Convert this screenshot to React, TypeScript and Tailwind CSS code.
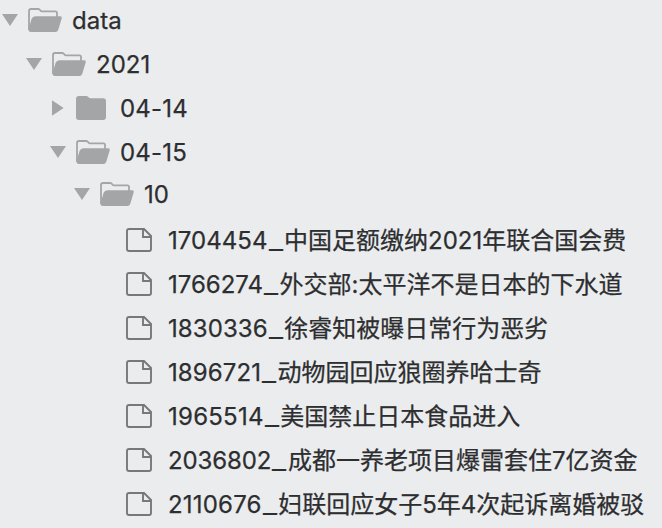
import clsx from "clsx";

type Entry = {
  name: string;
  title?: string;
  kind: "open" | "closed" | "file";
  indent: string;
  row?: string;
  tracking?: string;
};

const entries: Entry[] = [
  { name: "data", kind: "open", indent: "pl-[2px]" },
  { name: "2021", kind: "open", indent: "pl-[26px]" },
  { name: "04-14", kind: "closed", indent: "pl-[50px]", tracking: "tracking-[0.2px]" },
  { name: "04-15", kind: "open", indent: "pl-[50px]", tracking: "tracking-[0.2px]" },
  { name: "10", kind: "open", indent: "pl-[74px]", row: "h-10 mb-1" },
  { name: "1704454", title: "中国足额缴纳2021年联合国会费", kind: "file", indent: "pl-[126px]", tracking: "tracking-[0.05px]" },
  { name: "1766274", title: "外交部:太平洋不是日本的下水道", kind: "file", indent: "pl-[126px]" },
  { name: "1830336", title: "徐睿知被曝日常行为恶劣", kind: "file", indent: "pl-[126px]", tracking: "tracking-[0.08px]" },
  { name: "1896721", title: "动物园回应狼圈养哈士奇", kind: "file", indent: "pl-[126px]", tracking: "tracking-[0.1px]" },
  { name: "1965514", title: "美国禁止日本食品进入", kind: "file", indent: "pl-[126px]", tracking: "tracking-[0.25px]" },
  { name: "2036802", title: "成都一养老项目爆雷套住7亿资金", kind: "file", indent: "pl-[126px]", tracking: "tracking-[-0.1px]" },
  { name: "2110676", title: "妇联回应女子5年4次起诉离婚被驳", kind: "file", indent: "pl-[126px]", tracking: "tracking-[0.2px]" },
];

function Arrow({ open }: { open: boolean }) {
  return (
    <svg className="mr-[10px] h-4 w-4 shrink-0 fill-[#a4a5a7]" viewBox="0 0 16 16">
      <path d={open ? "M0 2h16L8 14Z" : "M2 0.2v15.6L13.6 8Z"} />
    </svg>
  );
}

function OpenFolder() {
  return (
    <svg className="mr-[10px] h-6 w-[34px] shrink-0" viewBox="0 0 34 24">
      <path
        d="M1 22V3Q1 1 3 1h7.2q1.3 0 1.9 1.2T14 3.3h13.5Q29 3.3 29 5v5"
        fill="none"
        stroke="#a4a5a7"
        strokeWidth="1.8"
      />
      <path
        d="M7.5 8.2H32q2.2 0 1.7 2.1l-3.3 11.2Q29.7 24 27.2 24H3Q0 24 .6 21l3-10.3Q4.5 8.2 7.5 8.2Z"
        fill="#a4a5a7"
      />
    </svg>
  );
}

function ClosedFolder() {
  return (
    <svg className="mr-[14px] h-6 w-[30px] shrink-0" viewBox="0 0 30 24">
      <path
        d="M3 0h7q1.6 0 2.3 1.1t2 1.1H27q3 0 3 3V21q0 3-3 3H3q-3 0-3-3V3Q0 0 3 0Z"
        fill="#a4a5a7"
      />
    </svg>
  );
}

function FileIcon() {
  return (
    <svg
      className="mr-4 h-6 w-[26px] shrink-0"
      viewBox="0 0 26 24"
      fill="none"
      stroke="#77787a"
      strokeWidth="1.9"
    >
      <path d="M3 1h15l7 7v13q0 2-2 2H3q-2 0-2-2V3q0-2 2-2Z" />
      <path d="M17 1v8h8" />
    </svg>
  );
}

export default function App() {
  return (
    <ul className="-mt-0.5 h-[530px] w-[662px] overflow-hidden bg-[#ebecee] font-['Inter','Noto_Sans_CJK_SC',sans-serif] text-[24px] leading-[44px] text-[#2d2e30]">
      {entries.map((e) => (
        <li
          key={e.name}
          className={clsx("flex items-center whitespace-nowrap", e.row ?? "h-11", e.indent)}
        >
          {e.kind !== "file" && <Arrow open={e.kind === "open"} />}
          {e.kind === "open" && <OpenFolder />}
          {e.kind === "closed" && <ClosedFolder />}
          {e.kind === "file" && <FileIcon />}
          <div className="flex pt-0.5 [-webkit-text-stroke:0.25px_#2d2e30]">
            <span className={e.tracking}>{e.name}</span>
            {e.title && (
              <>
                <span className="ml-px w-[15.5px]">
                  <span className="inline-block origin-left scale-x-[1.28]">_</span>
                </span>
                <span>{e.title}</span>
              </>
            )}
          </div>
        </li>
      ))}
    </ul>
  );
}
